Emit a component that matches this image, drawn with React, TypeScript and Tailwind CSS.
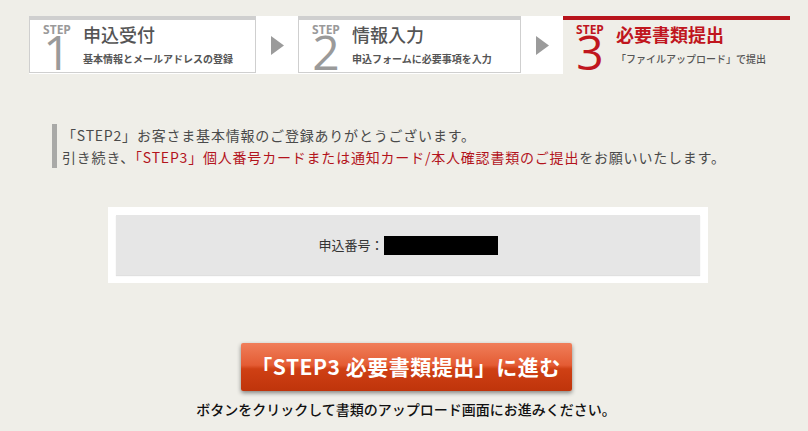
const jp = "font-['Noto_Sans_CJK_JP','Noto_Sans',sans-serif]"

type Step = { no: string; title: string; sub: string; current?: boolean }

const steps: Step[] = [
  { no: '1', title: '申込受付', sub: '基本情報とメールアドレスの登録' },
  { no: '2', title: '情報入力', sub: '申込フォームに必要事項を入力' },
  { no: '3', title: '必要書類提出', sub: '「ファイルアップロード」で提出', current: true },
]

function StepBody({ step }: { step: Step }) {
  const color = step.current ? 'text-[#c0161e]' : 'text-[#9a9a9a]'
  return (
    <div className="flex h-full items-start pl-[11px]">
      <div className={`flex w-[32px] flex-col items-center pt-[5px] ${color}`}>
        <span className="font-['Open_Sans',sans-serif] text-[12px] font-bold leading-[10px]">STEP</span>
        <span className="font-['Open_Sans',sans-serif] text-[48px] font-normal leading-[34px]">{step.no}</span>
      </div>
      <div className="ml-[10px] pt-[2px]">
        <div className={`text-[18px] leading-[24px] ${step.current ? 'font-bold text-[#c0161e]' : 'font-medium text-[#555]'}`}>
          {step.title}
        </div>
        <div className={`mt-[7px] text-[10px] leading-[12px] text-[#555] ${step.current ? 'font-medium' : 'font-bold'}`}>
          {step.sub}
        </div>
      </div>
    </div>
  )
}

function Arrow() {
  return (
    <div className="flex w-[42px] items-center justify-center">
      <svg width="13" height="19" viewBox="0 0 13 19">
        <polygon points="0,0 13,9.5 0,19" fill="#9b9b9b" />
      </svg>
    </div>
  )
}

export default function App() {
  return (
    <div className={`min-h-[431px] w-[808px] bg-[#efeee8] pt-[16px] ${jp}`}>
      {/* step bar */}
      <div className="ml-[29px] flex h-[58px]">
        <div className="flex bg-white">
          <div className="h-[57px] w-[227px] border border-t-4 border-[#cfcfcf]">
            <StepBody step={steps[0]} />
          </div>
          <Arrow />
          <div className="h-[57px] w-[223px] border border-t-4 border-[#cfcfcf]">
            <StepBody step={steps[1]} />
          </div>
          <Arrow />
        </div>
        <div className="h-[58px] w-[227px] border-t-4 border-[#b8141c]">
          <StepBody step={steps[2]} />
        </div>
      </div>

      {/* message */}
      <div className="ml-[52px] mt-[50px] border-l-[5px] border-[#a9a9a7] pl-[5px] text-[14px] leading-[22px] tracking-[0.8px] text-[#4a4a4a]">
        <p>「STEP2」お客さま基本情報のご登録ありがとうございます。</p>
        <p>
          引き続き、<span className="text-[#b3141c]">「STEP3」個人番号カードまたは通知カード/本人確認書類のご提出</span>をお願いいたします。
        </p>
      </div>

      {/* application number */}
      <div className="ml-[108px] mt-[39px] w-[600px] bg-white p-[8px]">
        <div className="flex h-[60px] items-center justify-center bg-[#e6e6e6] shadow-[0_1px_1px_rgba(0,0,0,0.12)]">
          <span className="text-[13px] text-[#333]">申込番号：</span>
          <span className="block h-[19px] w-[114px] bg-black" />
        </div>
      </div>

      {/* button */}
      <div className="mt-[60px] flex flex-col items-center pl-[4px]">
        <button className="flex h-[48px] w-[331px] items-center justify-center rounded-[2px] bg-[linear-gradient(to_bottom,#f07e5a_0%,#e45c34_46%,#cf4014_54%,#bf340b_100%)] text-[21px] font-bold tracking-[0.5px] text-white shadow-[0_2px_4px_rgba(0,0,0,0.45)]">
          「STEP3 必要書類提出」に進む
        </button>
        <p className="mt-[8px] text-[14px] font-medium leading-[20px] text-[#111]">
          ボタンをクリックして書類のアップロード画面にお進みください。
        </p>
      </div>
    </div>
  )
}
